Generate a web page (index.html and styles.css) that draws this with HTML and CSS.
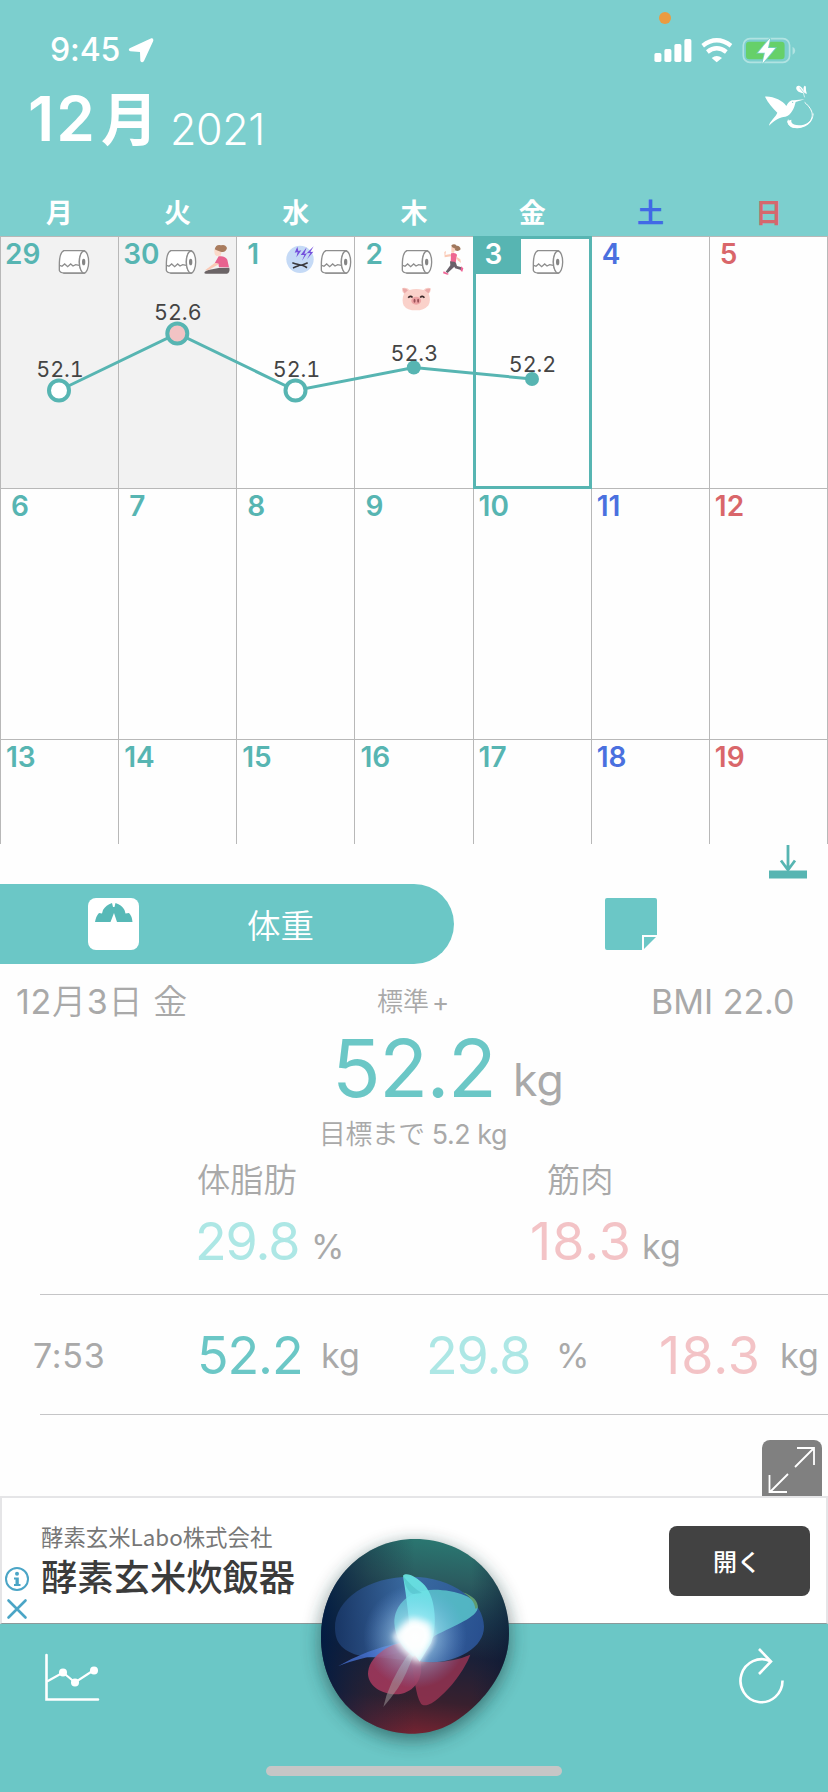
FILE: index.html
```
<!DOCTYPE html>
<html lang="ja">
<head>
<meta charset="utf-8">
<title>体重カレンダー</title>
<link rel="stylesheet" href="styles.css">
</head>
<body>
<svg class="defs" width="0" height="0" aria-hidden="true">
  <symbol id="roll" viewBox="176 56 96 78">
    <path d="M192 61H255M192 128H255" stroke="#8e8e8e" stroke-width="4" fill="none"/>
    <path d="M194 61Q180 66 180 104V120Q182 127 194 128H253Q240 118 240 95T253 61Z" fill="#fff" stroke="#8e8e8e" stroke-width="4"/>
    <ellipse cx="254" cy="95" rx="14" ry="33" fill="#fff" stroke="#8e8e8e" stroke-width="4"/>
    <ellipse cx="253" cy="95" rx="5" ry="10" fill="#858585"/>
    <path d="M181 105L188 108 196 101 205 109 214 101 221 107 229 103 240 105" fill="none" stroke="#8e8e8e" stroke-width="4"/>
  </symbol>
</svg>
<div class="screen">
  <header class="header">
    <div class="status">
      <span class="clock">9:45</span>
      <svg class="loc" viewBox="384 110 78 78"><path d="M454 114Q461 113 460 121L432 182Q426 190 421 182L420 155 391 153Q383 150 389 144Z" fill="#fff"/></svg>
      <i class="mic-dot"></i>
      <svg class="signals" viewBox="710 105 435 85">
        <g fill="#fff">
          <rect x="717" y="156" width="21" height="27" rx="5"/><rect x="747" y="144" width="21" height="39" rx="5"/>
          <rect x="777" y="129" width="21" height="54" rx="5"/><rect x="807" y="114" width="21" height="69" rx="5"/>
          <path d="M889 171Q904 159 920 171L904 184Z"/>
        </g>
        <path d="M862 134Q904 102 947 134M876 153Q904 131 933 153" fill="none" stroke="#fff" stroke-width="13"/>
        <rect x="984" y="113" width="139" height="71" rx="20" fill="none" stroke="#b1e3e2" stroke-width="5"/>
        <rect x="992" y="122" width="116" height="53" rx="10" fill="#66d069"/>
        <path d="M1132 137Q1140 142 1140 149T1132 161Z" fill="#b1e3e2"/>
        <path d="M1065 111L1028 155H1049L1041 188 1080 141H1058Z" fill="#fff" stroke="#7ad0cc" stroke-width="5" paint-order="stroke"/>
      </svg>
    </div>
    <div class="title">
      <h1><span class="num">12</span><span class="tsuki">月</span></h1>
      <span class="year">2021</span>
      <svg class="bird" viewBox="1045 250 160 140">
        <path d="M1051 288C1075 286 1104 300 1115 316C1123 302 1129 298 1138 299L1170 296 1143 304C1139 322 1130 344 1112 348C1096 350 1080 357 1063 375C1064 363 1084 348 1088 336C1074 323 1061 308 1051 288Z" fill="#fff"/>
        <path d="M1170 305C1198 329 1200 352 1178 370C1156 386 1115 386 1121 357" fill="none" stroke="#fff" stroke-width="3"/>
        <path d="M1196 336C1194 379 1137 381 1130 364L1130 357 1118 361C1118 394 1193 391 1197 340Z" fill="#fff"/>
        <path d="M1170 278C1146 277 1141 263 1147 257C1151 252 1163 255 1170 278ZM1171 278C1164 264 1167 258 1170 255 1177 256 1171 265 1177 279Z" fill="#fff"/>
        <path d="M1155 261L1170 280V290" stroke="#7ccfce" stroke-width="2" fill="none"/><path d="M1166 276L1170 290" stroke="#fff" stroke-width="2"/>
        <circle cx="1134" cy="305" r="2" fill="#7ccfce"/>
      </svg>
    </div>
    <div class="week"><span>月</span><span>火</span><span>水</span><span>木</span><span>金</span><span class="sat">土</span><span class="sun">日</span></div>
  </header>

  <main class="calendar">
    <div class="day past"><b>29</b><svg class="roll r29"><use href="#roll"/></svg></div>
    <div class="day past"><b>30</b><svg class="roll r30"><use href="#roll"/></svg>
      <svg class="yoga" viewBox="608 42 84 92">
        <path d="M612 128Q614 122 628 119L655 114 687 113Q690 127 680 131H620Q612 132 612 128Z" fill="#6b6466"/>
        <path d="M642 60Q648 51 666 57L661 77 649 78Q641 75 642 60Z" fill="#fbd9c9"/>
        <path d="M643 58Q647 42 662 46Q675 42 680 54 676 69 661 65L649 61Z" fill="#a97c5e"/>
        <path d="M655 79Q674 76 681 89L686 112H656L654 101 643 100Z" fill="#e8628f"/>
        <path d="M643 99L657 102 623 121H614Z" fill="#fbc9b5"/>
      </svg></div>
    <div class="day one"><b>1</b>
      <svg class="cramp" viewBox="856 45 86 86"><circle cx="898" cy="88" r="41" fill="#c5daf6"/>
        <path d="M890 50L882 68 891 66 887 82 902 61 893 63ZM918 52L900 75H911L904 92 919 70 911 72ZM939 49L918 70 929 69 919 88 938 65 929 66Z" fill="#7450dc"/>
        <path d="M875 98Q894 104 899 105T921 98M877 114Q895 106 900 105T919 113" fill="none" stroke="#39383d" stroke-width="5"/></svg>
      <svg class="roll r1"><use href="#roll"/></svg></div>
    <div class="day one"><b>2</b>
      <div class="pair"><svg class="roll"><use href="#roll"/></svg>
      <svg class="pig" viewBox="156 168 94 76"><path d="M160 174Q174 171 182 180Q202 174 224 180Q234 170 246 175Q247 187 240 191 248 212 239 227 225 242 202 242 174 242 164 227 157 211 165 191 157 184 160 174Z" fill="#fad1ca"/><path d="M161 175Q173 175 177 181L167 190Q161 184 161 175ZM245 176Q233 175 228 181L239 190Q245 184 245 176Z" fill="#eaa9a8"/><ellipse cx="202" cy="213" rx="15" ry="12" fill="#eda3a4"/><g fill="#9b5058"><ellipse cx="197" cy="213" rx="3" ry="6"/><ellipse cx="208" cy="213" rx="3" ry="6"/></g><path d="M178 204Q184 196 191 203M214 203Q221 196 227 204" stroke="#3c2929" stroke-width="5" fill="none"/></svg></div>
      <svg class="runner" viewBox="276 38 66 98">
        <path d="M304 45Q313 38 320 46 330 45 332 57 325 65 315 60L307 55Z" fill="#a0785d"/><path d="M304 49L316 55 312 67H304Z" fill="#fbd0bd"/>
        <path d="M302 71L286 74 288 62 283 65 284 81 303 78Z" fill="#fac9b5"/><path d="M303 69Q317 65 321 73L317 98 302 96Z" fill="#ee6690"/><path d="M317 78L331 87 333 98 323 90Z" fill="#fac9b5"/>
        <path d="M300 93L317 95 313 109 293 128 287 124 301 105ZM308 97L318 98 321 107 335 111 333 119 315 114Z" fill="#68616a"/><path d="M281 123L297 131 292 133 279 129ZM333 108L340 114 337 124 332 122Z" fill="#ef6496"/>
      </svg></div>
    <div class="day one today"><b>3</b><svg class="roll r3"><use href="#roll"/></svg></div>
    <div class="day one sat"><b>4</b></div><div class="day one sun"><b>5</b></div>
    <div class="day one"><b>6</b></div><div class="day one"><b>7</b></div><div class="day one"><b>8</b></div><div class="day one"><b>9</b></div><div class="day"><b>10</b></div><div class="day sat"><b>11</b></div><div class="day sun"><b>12</b></div>
    <div class="day"><b>13</b></div><div class="day"><b>14</b></div><div class="day"><b>15</b></div><div class="day"><b>16</b></div><div class="day"><b>17</b></div><div class="day sat"><b>18</b></div><div class="day sun"><b>19</b></div>
    <svg class="chart" viewBox="0 236 828 252">
      <path d="M59 390.500L177.300 333.500 295.500 390.500 413.800 367.500 532 379" fill="none" stroke="#57b5b2" stroke-width="3"/>
      <g stroke="#57b5b2" stroke-width="4"><circle cx="59" cy="390.500" r="10" fill="#fff"/><circle cx="177.300" cy="333.500" r="10" fill="#f2c3c4"/><circle cx="295.500" cy="390.500" r="10" fill="#fff"/></g>
      <circle cx="413.800" cy="367.500" r="7" fill="#57b5b2"/><circle cx="532" cy="379" r="7" fill="#57b5b2"/>
      <g class="labels"><text x="60" y="377">52.1</text><text x="177.800" y="320">52.6</text><text x="296.500" y="377">52.1</text><text x="414.300" y="361">52.3</text><text x="532.500" y="372">52.2</text></g>
    </svg>
  </main>

  <div class="collapse"><svg viewBox="0 0 38 34"><path d="M19 0V25M12 15.500L19 25 26 15.500" fill="none" stroke="#57b5b2" stroke-width="2.800"/><rect y="25.500" width="38" height="8" fill="#57b5b2"/></svg></div>

  <nav class="tabs">
    <div class="tab active">
      <svg class="scale" viewBox="0 0 52 52"><rect width="51" height="52" rx="8" fill="#fff"/><path d="M7 24Q8 18 11 15L14 15.500 15 12Q18 7 24 5L25 9H26.500L27.500 5Q34 7 36.500 12L37.500 15.500 41 15Q44 18 44.500 24H29L26 15 22.500 24Z" fill="#57b9b7"/></svg>
      <span>体重</span>
    </div>
    <div class="tab memo"><svg viewBox="0 0 52 52"><path d="M2 0H50Q52 0 52 2V37H37V52H2Q0 52 0 50V2Q0 0 2 0Z" fill="#6bc7c6"/><path d="M39 39H51L39 51Z" fill="#6bc7c6"/></svg></div>
  </nav>

  <section class="detail">
    <div class="summary"><span class="date">12<span class="jp">月</span>3<span class="jp">日 金</span></span><span class="rank"><span class="jp">標準</span><span class="plus">+</span></span><span class="bmi">BMI 22.0</span></div>
    <div class="weight"><strong>52.2</strong><span>kg</span></div>
    <div class="goal"><span class="jp">目標まで</span> 5.2 kg</div>
    <div class="names jp"><span>体脂肪</span><span>筋肉</span></div>
    <div class="values"><span class="v fat">29.8</span><span class="u">%</span><span class="v muscle">18.3</span><span class="u">kg</span></div>
    <div class="record"><span class="time">7:53</span><span class="v">52.2</span><span>kg</span><span class="v fat">29.8</span><span>%</span><span class="v muscle">18.3</span><span>kg</span></div>
    <div class="expand"><svg viewBox="0 0 60 56"><path d="M35 8H52V25M52 8L33 27M26 34L8 52M7.500 35V52H25" fill="none" stroke="#fff" stroke-width="1.800"/></svg></div>
  </section>

  <aside class="ad">
    <div class="marks"><svg viewBox="0 0 24 56"><circle cx="12" cy="12" r="11" fill="none" stroke="#4ba5c6" stroke-width="2"/><circle cx="12" cy="6.700" r="2" fill="#4ba5c6"/><path d="M9 10.500H13.800V17H15.500V19H9V17H10.500V12.500H9Z" fill="#4ba5c6"/><path d="M3.500 33.500L20.500 50.500M20.500 33.500L3.500 50.500" stroke="#4ba5c6" stroke-width="2.600" stroke-linecap="round"/></svg></div>
    <div class="copy"><span class="company">酵素玄米Labo株式会社</span><span class="product">酵素玄米炊飯器</span></div>
    <div class="open">開く</div>
  </aside>

  <footer class="footer">
    <svg class="graph" viewBox="0 0 54 48"><path d="M1.500 1V45.500H53" fill="none" stroke="#fff" stroke-width="2.600" stroke-linecap="round"/><path d="M2 27.500L18 18.500 30 28.500 49 16" fill="none" stroke="#fff" stroke-width="2.200"/><g fill="#fff"><circle cx="18" cy="18.500" r="4"/><circle cx="30" cy="28.500" r="4"/><circle cx="49" cy="16.500" r="4"/></g></svg>
    <svg class="reload" viewBox="0 0 46 56"><path d="M43.500 32.500A21 21.500 0 1 1 31.500 13.300" fill="none" stroke="#fff" stroke-width="2.600"/><path d="M20 1L32 13.500 20 26" fill="none" stroke="#fff" stroke-width="2.600"/></svg>
    <svg class="orb" viewBox="0 0 690 690">
      <defs>
        <linearGradient id="base" x1="0.55" y1="0" x2="0.45" y2="1"><stop offset="0" stop-color="#2a7771"/><stop offset=".2" stop-color="#2b5c60"/><stop offset=".4" stop-color="#1c3a4e"/><stop offset=".58" stop-color="#1a2038"/><stop offset=".82" stop-color="#38202e"/><stop offset="1" stop-color="#752331"/></linearGradient>
        <linearGradient id="left" x1="0" y1="0" x2="1" y2="0"><stop offset="0" stop-color="#001b43" stop-opacity=".9"/><stop offset=".25" stop-color="#10213b" stop-opacity=".4"/><stop offset=".5" stop-color="#16243a" stop-opacity="0"/><stop offset=".8" stop-color="#101e38" stop-opacity="0"/><stop offset="1" stop-color="#06142f" stop-opacity=".5"/></linearGradient>
        <radialGradient id="glow"><stop offset="0" stop-color="#fff"/><stop offset=".2" stop-color="#f4ffff" stop-opacity=".95"/><stop offset=".45" stop-color="#b6e4ff" stop-opacity=".45"/><stop offset="1" stop-color="#76a9f0" stop-opacity="0"/></radialGradient>
        <linearGradient id="blue" x1="0" y1="0" x2="1" y2="0"><stop offset="0" stop-color="#1b3a6c"/><stop offset=".5" stop-color="#3d6fae"/><stop offset="1" stop-color="#2b559c"/></linearGradient>
        <filter id="shade" x="-30%" y="-30%" width="160%" height="160%"><feGaussianBlur stdDeviation="28"/></filter>
        <filter id="soft" x="-30%" y="-30%" width="160%" height="160%"><feGaussianBlur stdDeviation="9"/></filter>
      </defs>
      <path d="M345 57C500 57 627 175 627 340C627 430 580 500 540 542C470 614 410 642 326 641C170 632 63 510 63 350C63 185 190 57 345 57Z" transform="translate(0 18)" fill="#173636" opacity=".6" filter="url(#shade)"/>
      <path d="M345 57C500 57 627 175 627 340C627 430 580 500 540 542C470 614 410 642 326 641C170 632 63 510 63 350C63 185 190 57 345 57Z" fill="url(#base)"/>
      <path d="M345 57C500 57 627 175 627 340C627 430 580 500 540 542C470 614 410 642 326 641C170 632 63 510 63 350C63 185 190 57 345 57Z" fill="url(#left)"/>
      <path d="M105 325C103 235 208 170 332 170C460 170 552 245 552 320C552 382 475 427 385 427C319 425 276 411 202 412C123 399 106 366 105 325Z" fill="url(#blue)" opacity=".85"/>
      <path d="M114 439Q196 389 300 368L340 386Q268 410 202 412 150 424 114 439Z" fill="#456fd0" opacity=".8"/>
      <path d="M204 461C204 415 260 372 318 365L361 420C375 482 334 523 288 523C245 522 205 499 204 461Z" fill="#a83a5e" opacity=".85"/>
      <path d="M332 420C344 470 346 524 363 551C374 563 397 551 417 533C462 496 500 435 511 404Q430 439 332 420Z" fill="#9e3454" opacity=".78"/>
      <path d="M250 561Q265 489 321 408L346 389Q318 468 294 504 272 536 250 561Z" fill="#a7a2a2" opacity=".5"/>
      <path d="M283 310C282 251 330 210 402 209C468 209 536 235 533 264C531 291 466 316 404 347L340 410Q287 371 283 310Z" fill="#58c1ca" opacity=".88"/>
      <path d="M488 217C518 227 536 244 533 264L526 266C524 246 511 231 488 217Z" fill="#609c70"/>
      <path d="M309 167C319 154 351 170 374 196C409 236 412 324 393 370L359 425 334 390Q326 268 309 167Z" fill="#6ce9e5" opacity=".9"/>
      <path d="M309 167Q320 220 343 222L366 219Q336 202 309 167Z" fill="#43b5b9" opacity=".4"/>
      <circle cx="345" cy="350" r="155" fill="url(#glow)"/>
      <path d="M276 350L335 296 389 312 396 352 363 428 339 420 302 376Z" fill="#fff" opacity=".9" filter="url(#soft)"/>
    </svg>
    <i class="home"></i>
  </footer>
</div>
</body>
</html>
```
FILE: styles.css
```
* { box-sizing: border-box; }
body { margin: 0; background: #fff; font-family: Inter, "Noto Sans CJK JP", sans-serif; color: #a9a9a9; }
svg { display: block; flex: none; overflow: visible; }
.defs { position: absolute; }
.screen { width: 828px; height: 1792px; display: flex; flex-direction: column; overflow: hidden; background: #fefefe; }

.header { height: 236px; flex: none; background: #7ccfce; color: #fff; display: flex; flex-direction: column; }
.status { position: relative; height: 84px; padding: 16px 31px 0 50px; display: flex; align-items: center; }
.clock { width: 78px; font-size: 32px; font-weight: 500; line-height: 40px; letter-spacing: -0.1px; white-space: nowrap; }
.loc { width: 26px; height: 26px; }
.signals { width: 145px; height: 28.300px; margin-left: auto; }
.mic-dot { position: absolute; left: 659px; top: 12px; width: 12px; height: 12px; border-radius: 50%; background: #eb9b40; }
.title { height: 69px; padding: 0 12px 0 28px; display: flex; }
h1 { margin: 0; width: 142px; display: flex; line-height: 69px; font-size: 62px; font-weight: 600; }
.num { width: 73px; letter-spacing: 2px; }
.tsuki { font-family: "Noto Sans CJK JP", sans-serif; font-size: 57px; font-weight: 700; line-height: 63px; }
.year { padding-top: 21px; font-size: 43px; font-weight: 300; line-height: 48px; letter-spacing: -0.400px; }
.bird { width: 53.300px; height: 46.700px; margin-left: auto; }
.week { margin-top: 36px; height: 47px; display: grid; grid-template-columns: repeat(7, 1fr); text-align: center; font: 700 27px/46px "Noto Sans CJK JP", sans-serif; }
.week .sat { color: #4169e6; }
.week .sun { color: #d5686d; }

.calendar { position: relative; height: 608px; flex: none; overflow: hidden; display: grid; grid-template-columns: repeat(7, 1fr); grid-template-rows: repeat(3, 251.700px); border-right: 1px solid #b8b8b8; background: #fefefe; }
.day { border-left: 1px solid #b8b8b8; border-top: 1px solid #b8b8b8; display: flex; align-items: flex-start; color: #57b5b2; }
.day b { width: 45px; flex: none; padding-left: 5px; font-size: 28px; font-weight: 600; line-height: 34px; letter-spacing: 0; }
.one b { padding-left: 10px; }
.past b { padding-left: 4px; }
.past { background: #f2f2f2; }
.day.sat { color: #4a70df; }
.day.sun { color: #d9666a; }
.today { border: 3px solid #57b5b2; margin-bottom: -1px; margin-right: -1px; z-index: 1; }
.today b { height: 35px; padding-left: 9px; line-height: 30px; color: #fff; background: #57b5b2; }
.roll { width: 32px; height: 26px; margin-top: 12px; }
.r29 { margin-left: 12px; }
.r30 { margin-left: 1px; }
.r3 { margin-left: 11px; margin-top: 10px; }
.yoga { width: 28px; height: 30.700px; margin: 7px 0 0 6px; }
.cramp { width: 28.700px; height: 28.700px; margin: 8px 0 0 4px; }
.r1 { margin-left: 5px; }
.pair { width: 32px; margin-left: 1px; }
.pig { width: 31px; height: 25px; margin-top: 11px; }
.runner { width: 22px; height: 32.700px; margin: 6px 0 0 9px; }
.chart { position: absolute; left: 0; top: 0; width: 828px; height: 252px; z-index: 2; }
.labels text { font-size: 21.500px; fill: #444; text-anchor: middle; letter-spacing: 0; font-variant-numeric: tabular-nums; }

.collapse { height: 40px; flex: none; padding: 1px 21px 0 0; display: flex; justify-content: flex-end; }
.collapse svg { width: 38px; height: 34px; }
.tabs { height: 80px; flex: none; display: flex; }
.tab { display: flex; align-items: center; }
.active { width: 454px; padding-left: 88px; background: #6bc7c6; color: #fff; border-radius: 0 40px 40px 0; }
.active span { margin-left: 107px; font: 350 33.500px/40px "Noto Sans CJK JP", sans-serif; }
.scale, .memo svg { width: 52px; height: 52px; }
.memo { padding-left: 151px; }

.detail { height: 532px; flex: none; font-weight: 400; display: flex; flex-direction: column; }
.detail > div { white-space: nowrap; }
.jp { font-weight: 350; }
.summary { height: 74px; display: grid; grid-template-columns: 361px 274px 1fr; padding-left: 16px; font-size: 34px; line-height: 76px; }
.summary .rank { font-size: 26px; }
.plus { margin-left: 3px; }
.date { letter-spacing: 0.700px; }
.bmi { letter-spacing: 0; }
.weight { height: 60px; display: grid; grid-template-columns: 181px 1fr; padding-left: 332px; }
.weight strong { font-size: 80px; line-height: 60px; font-weight: 400; letter-spacing: -1.500px; color: #6bc7c6; }
.weight span { padding-top: 22px; font-size: 44.500px; line-height: 40px; }
.goal { height: 70px; padding-left: 319px; font-size: 26.800px; line-height: 72px; letter-spacing: -0.400px; }
.names { height: 24px; display: grid; grid-template-columns: 350px 1fr; padding-left: 197px; font-size: 33.300px; line-height: 24px; }
.values { height: 102px; display: grid; grid-template-columns: 116px 219px 112px 1fr; padding-left: 195px; line-height: 100px; font-size: 34px; }
.v { font-size: 52px; letter-spacing: -1.100px; color: #6bc7c6; }
.fat { color: #ade7e5; }
.muscle { color: #f3c3c6; letter-spacing: 1px; }
.values .u { padding-top: 5px; }
.record { height: 121px; margin-left: 40px; border-top: 1px solid #c5c5c7; border-bottom: 1px solid #c5c5c7; display: grid; grid-template-columns: 157px 124px 105px 130px 103px 121px 1fr; font-size: 34px; line-height: 122px; }
.time { margin-left: -7px; letter-spacing: 0.700px; }
.expand { margin: 25px 6px 0 auto; width: 60px; height: 56px; background: #808080; border-radius: 8px 8px 0 0; }
.expand svg { width: 60px; height: 56px; }

.ad { height: 128px; flex: none; border: 2px solid #e5e5e7; border-bottom: 1px solid #8b9a9b; background: #fff; display: flex; padding-left: 3px; }
.marks { width: 36px; padding-top: 69px; }
.marks svg { width: 24px; height: 56px; }
.copy { display: flex; flex-direction: column; font-family: "Noto Sans CJK JP", sans-serif; white-space: nowrap; }
.company { margin-top: 22px; font-size: 22.400px; line-height: 32px; color: #777; }
.product { margin-top: 4px; font-size: 36.300px; line-height: 38px; font-weight: 500; color: #3b3b3b; }
.open { margin: 28px 16px 0 auto; width: 141px; height: 70px; padding-right: 5px; border-radius: 8px; background: #424242; color: #fff; text-align: center; font: 500 24px/70px "Noto Sans CJK JP", sans-serif; }

.footer { position: relative; height: 168px; flex: none; background: #6bc7c6; display: flex; justify-content: space-between; padding: 30px 45px 0; }
.graph { width: 54px; height: 48px; }
.reload { width: 46px; height: 56px; margin-top: -6px; margin-right: -2px; }
.orb { position: absolute; left: 300px; top: -104px; width: 230px; height: 230px; }
.home { position: absolute; left: 266px; top: 142px; width: 296px; height: 10px; border-radius: 5px; background: #c6c6c6; }
```
